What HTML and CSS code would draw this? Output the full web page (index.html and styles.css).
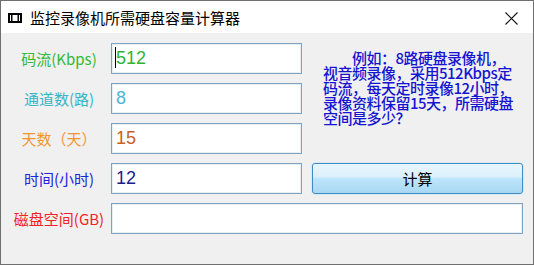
FILE: index.html
```html
<!DOCTYPE html>
<html>
<head>
  <title>监控录像机所需硬盘容量计算器</title>
  <link rel="stylesheet" href="styles.css">
</head>
<body>
  <div class="window">
    <div class="titlebar">
      <svg class="app-icon" width="14" height="10" viewBox="0 0 14 10">
        <rect x="1" y="1" width="12" height="8" fill="#fff" stroke="#000" stroke-width="2"/>
        <rect x="3" y="2" width="1.5" height="6" fill="#000"/>
        <rect x="9.5" y="2" width="1.5" height="6" fill="#000"/>
      </svg>
      <span class="title">监控录像机所需硬盘容量计算器</span>
      <svg class="close" width="13" height="13" viewBox="0 0 13 13">
        <path d="M0.5 0.5 L12.5 12.5 M12.5 0.5 L0.5 12.5" stroke="#111" stroke-width="1.1"/>
      </svg>
    </div>

    <div class="client">
      <label class="lbl green">码流(Kbps)</label>
      <div class="field">
        <input type="text" class="box green-val" value="512">
        <span class="caret"></span>
      </div>
      <div class="example">
        <span class="indent">例如：8路硬盘录像机，</span><br>
        视音频录像，采用512Kbps定<br>
        码流，每天定时录像12小时，<br>
        录像资料保留15天，所需硬盘<br>
        空间是多少？
      </div>

      <label class="lbl cyan">通道数(路)</label>
      <input type="text" class="box cyan-val" value="8">

      <label class="lbl orange">天数（天）</label>
      <input type="text" class="box orange-val" value="15">

      <label class="lbl blue">时间(小时)</label>
      <input type="text" class="box blue-val" value="12">
      <button type="button" class="btn">计算</button>

      <label class="lbl red">磁盘空间(GB)</label>
      <input type="text" class="box wide" value="">
    </div>
  </div>
</body>
</html>
```

FILE: styles.css
```css
body {
  margin: 0;
  padding: 0;
  background-color: #f0f0f0;
  font-family: "Noto Sans CJK SC", sans-serif;
}

.window {
  width: 534px;
  height: 265px;
  box-sizing: border-box;
  border: 1px solid #6f6f6f;
  background-color: #f0f0f0;
}

.titlebar {
  height: 32px;
  background-color: #fff;
  display: flex;
  align-items: center;
  padding-left: 7px;
}

.app-icon {
  margin-top: 1px;
}

.title {
  margin-left: 8px;
  font-size: 15px;
  color: #000;
  flex: 1;
}

.close {
  margin-right: 15px;
  margin-top: 2px;
}

.client {
  display: grid;
  grid-template-columns: 110px 191px 1fr;
  grid-auto-rows: 31px;
  row-gap: 9px;
  padding: 10px 10px 0 0;
}

.lbl {
  grid-column: 1;
  display: flex;
  align-items: center;
  justify-content: center;
  font-size: 15px;
  white-space: nowrap;
  padding-left: 6px;
}

.green { color: #35b835; }
.cyan { color: #36b4c8; }
.orange { color: #f29430; }
.blue { color: #2323dc; }
.red { color: #f02424; }

.field {
  position: relative;
  display: flex;
}

.box {
  grid-column: 2;
  width: 100%;
  height: 31px;
  box-sizing: border-box;
  margin: 0;
  padding: 0 4px;
  border: 1px solid #7fa2c2;
  box-shadow: inset 0 0 0 1px #e6eef6;
  background-color: #fff;
  font-family: "Liberation Sans", Arial, sans-serif;
  font-size: 18px;
  outline: none;
}

.green-val { color: #2fb52f; }
.cyan-val { color: #4cb6d2; }
.orange-val { color: #c9621c; }
.blue-val { color: #1c1c8c; }

.caret {
  position: absolute;
  left: 4px;
  top: 4px;
  width: 1px;
  height: 21px;
  background-color: #000;
}

.wide {
  grid-column: 2 / 4;
}

.example {
  grid-column: 3;
  grid-row: 1 / 4;
  margin-left: 21px;
  margin-top: 7px;
  font-size: 15px;
  font-weight: 500;
  line-height: 15px;
  letter-spacing: -0.5px;
  color: #1414d2;
  white-space: nowrap;
}

.indent {
  padding-left: 29px;
}

.btn {
  grid-column: 3;
  margin-left: 10px;
  height: 31px;
  border: 1px solid #3c8cc8;
  border-radius: 3px;
  background: linear-gradient(to bottom, #eaf6fd 0%, #d9f0fc 45%, #bee6fd 50%, #a9d7f2 100%);
  box-shadow: 0 0 2px #a8d8f8;
  font-family: "Noto Sans CJK SC", sans-serif;
  font-size: 15px;
  color: #000;
  padding: 0;
}
```
